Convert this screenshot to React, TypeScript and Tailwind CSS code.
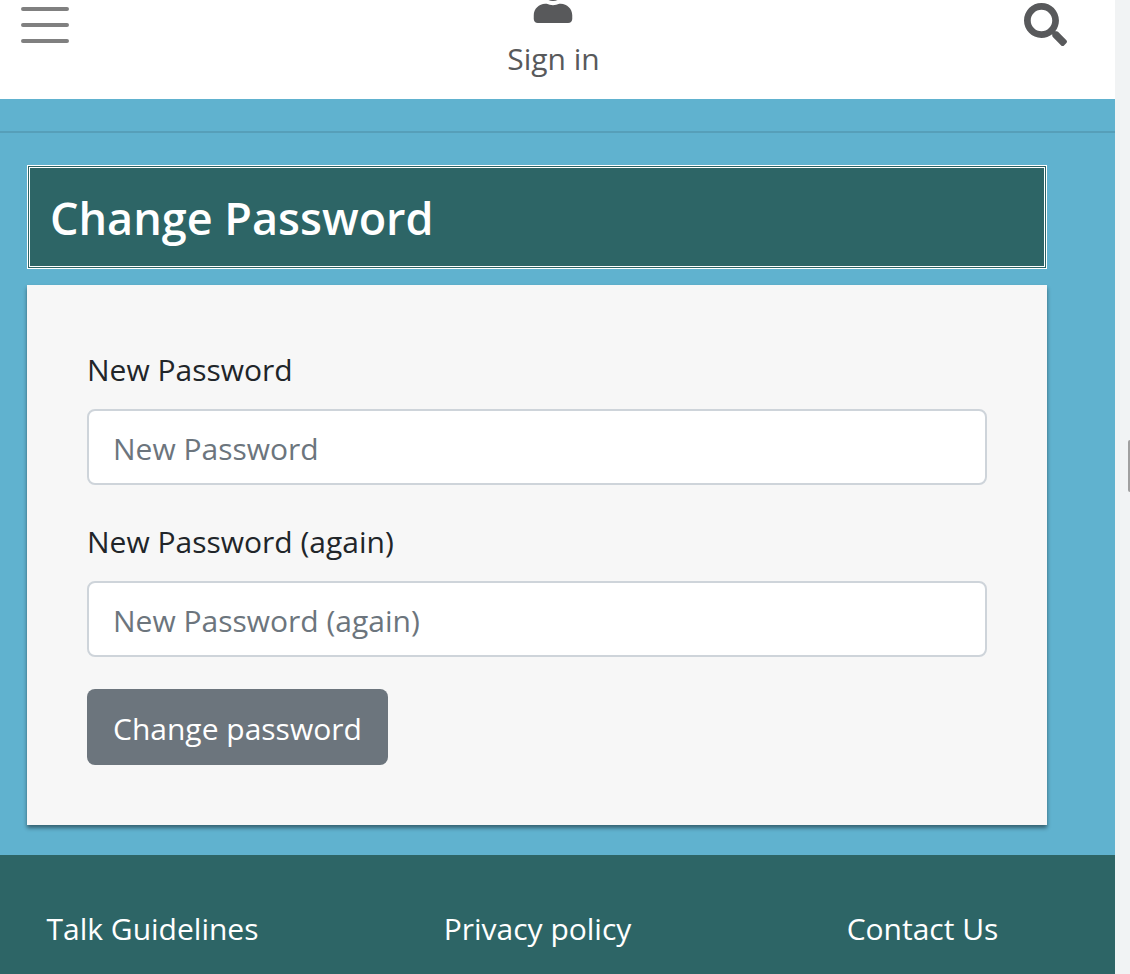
import { FaSearch, FaUser } from "react-icons/fa";

const fields = [
  { id: "new-password", label: "New Password" },
  { id: "new-password-again", label: "New Password (again)" },
];

const footerLinks = ["Talk Guidelines", "Privacy policy", "Contact Us"];

function Header() {
  return (
    <header className="grid h-[99px] grid-cols-3 items-start bg-white pl-5 pr-7 text-[#58595b]">
      <button type="button" aria-label="Toggle navigation" className="mt-[7px] ml-px justify-self-start">
        <svg width="48" height="36" viewBox="0 0 48 36" stroke="#808080" strokeWidth="4" strokeLinecap="round">
          <path d="M2 2h44M2 18h44M2 34h44" />
        </svg>
      </button>
      <a href="#sign-in" className="flex flex-col items-center">
        <span className="flex h-[23px] items-end overflow-hidden">
          <FaUser size={44} className="shrink-0" />
        </span>
        <span className="mt-3 leading-[48px]">Sign in</span>
      </a>
      <button type="button" aria-label="Search" className="mr-5 mt-[3px] justify-self-end">
        <FaSearch size={43} />
      </button>
    </header>
  );
}

function PasswordForm() {
  return (
    <form
      className="mt-4 flex flex-col items-start bg-[#f7f7f7] p-[60px] shadow-[0_3px_4px_rgba(0,0,0,0.45)]"
      onSubmit={(e) => e.preventDefault()}
    >
      {fields.map((f) => (
        <div key={f.id} className="mb-8 w-full">
          <label htmlFor={f.id} className="mb-[15px] block pt-px leading-[48px] text-[#212529]">
            {f.label}
          </label>
          <input
            id={f.id}
            type="password"
            placeholder={f.label}
            className="block h-[76px] w-full rounded-lg border-2 border-[#ced4da] bg-white px-6 pt-0.5 placeholder:text-[#6c757d] placeholder:opacity-100"
          />
        </div>
      ))}
      <button type="submit" className="h-[76px] rounded-lg bg-[#6c757d] px-[26px] pt-0.5 text-white">
        Change password
      </button>
    </form>
  );
}

export default function App() {
  return (
    <div className="flex min-h-screen bg-[#f1f3f4] font-['Segoe_UI','Open_Sans',sans-serif] text-[30px]">
      <div className="flex min-w-0 flex-1 flex-col bg-[#60b2cf]">
        <Header />
        <hr className="mt-8 border-t-2 border-black/10" />
        <main className="mb-[30px] ml-[27px] mr-[68px] mt-8">
          <h1 className="border-[3px] border-double border-white bg-[#2d6566] px-5 pb-[19px] pt-[21px] text-[45px] font-semibold leading-[58px] text-white">
            Change Password
          </h1>
          <PasswordForm />
        </main>
        <footer className="flex-1 overflow-hidden bg-[#2d6566] pt-[50px] text-white">
          <nav className="-ml-10 grid grid-cols-3 text-center leading-[48px]">
            {footerLinks.map((text) => (
              <a key={text} href="#footer">
                {text}
              </a>
            ))}
          </nav>
        </footer>
      </div>
      <div className="flex w-[15px] flex-col items-end pt-[440px]">
        <div className="h-[52px] w-0.5 rounded-l-sm bg-[#a0a0a0]" />
      </div>
    </div>
  );
}
